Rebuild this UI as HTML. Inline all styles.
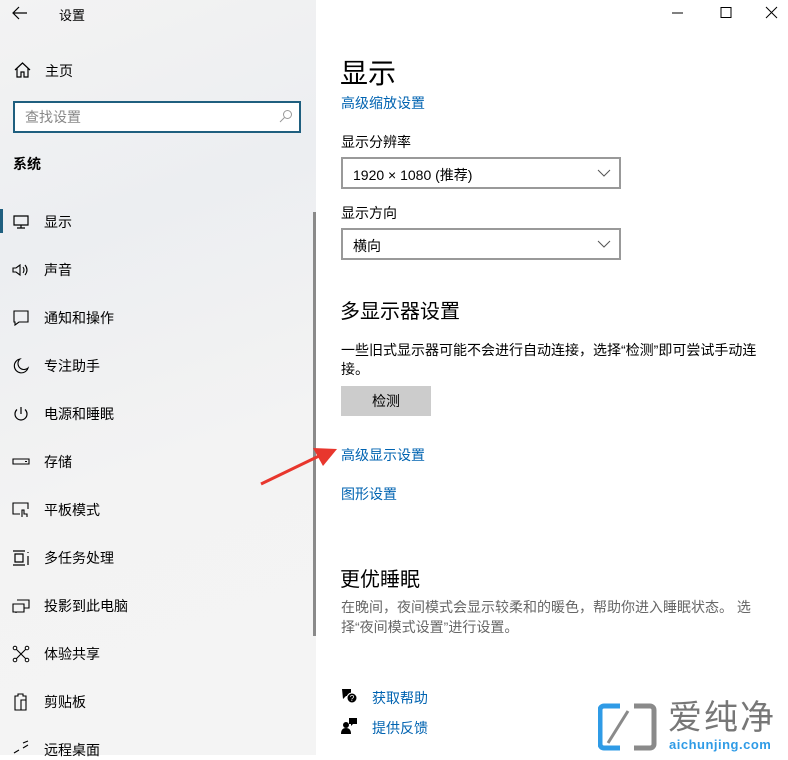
<!DOCTYPE html>
<html><head><meta charset="utf-8"><style>
*{margin:0;padding:0;box-sizing:border-box}
body{width:788px;height:755px;overflow:hidden;position:relative;font-family:"Liberation Sans","Noto Sans CJK SC",sans-serif;background:#fff;color:#000}
.side{position:absolute;left:0;top:0;width:316px;height:755px;background:linear-gradient(160deg,#f3f3f3 0%,#eceef1 30%,#f3f3f3 60%,#f4f4f4 100%)}
.abs{position:absolute}
.t{font-size:14px;white-space:nowrap}
.nav{position:absolute;left:44px;font-size:14px}
.ic{position:absolute;left:12px;width:18px;height:18px}
.link{color:#0063b1;font-size:14px;position:absolute;left:341px;white-space:nowrap}
.dd{position:absolute;left:341px;width:280px;height:32px;border:2px solid #999;background:#fff;font-size:14px;padding:6px 0 0 10px}
.dd svg{position:absolute;right:8px;top:10px}
</style></head><body>
<div class="side">
<svg class="abs" style="left:12px;top:6px" width="16" height="14" viewBox="0 0 16 14"><path d="M15 7H2M7 1L1 7l6 6" fill="none" stroke="#000" stroke-width="1.2"/></svg>
<div class="abs t" style="left:59px;top:5px;font-size:13px">设置</div>
<svg class="abs" style="left:14px;top:62px" width="17" height="16" viewBox="0 0 17 16"><path d="M1 8L8.5 1 16 8M3 6v9h4v-5h3v5h4V6" fill="none" stroke="#000" stroke-width="1.2"/></svg>
<div class="abs t" style="left:45px;top:61px">主页</div>
<div class="abs" style="left:13px;top:101px;width:288px;height:32px;border:2px solid #1f5f7f;background:#fff"></div>
<div class="abs t" style="left:25px;top:107px;color:#888">查找设置</div>
<svg class="abs" style="left:279px;top:109px" width="14" height="14" viewBox="0 0 14 14"><circle cx="8.5" cy="5.5" r="4" fill="none" stroke="#999"/><path d="M5.5 8.5L1 13" stroke="#999"/></svg>
<div class="abs t" style="left:13px;top:154px;font-weight:bold">系统</div>
<div class="abs" style="left:0;top:209px;width:3px;height:24px;background:#1f5f7f"></div>
<div class="abs" style="left:313px;top:212px;width:3px;height:424px;background:#8a8a8a"></div>

<svg class="ic" style="top:213px" viewBox="0 0 18 18"><path d="M2 3h14v9H2zM9 12v3M5 15h8" fill="none" stroke="#000" stroke-width="1.2"/></svg><div class="nav" style="top:212px">显示</div>
<svg class="ic" style="top:261px" viewBox="0 0 18 18"><path d="M1 7h3l4-3v10l-4-3H1zM11 6q2 3 0 6M13 4q4 5 0 10" fill="none" stroke="#000" stroke-width="1.1"/></svg><div class="nav" style="top:260px">声音</div>
<svg class="ic" style="top:309px" viewBox="0 0 18 18"><path d="M2 2h14v11H7l-4 3v-3H2z" fill="none" stroke="#000" stroke-width="1.1"/></svg><div class="nav" style="top:308px">通知和操作</div>
<svg class="ic" style="top:357px" viewBox="0 0 18 18"><path d="M8 2a7 7 0 1 0 8 9A6 6 0 0 1 8 2z" fill="none" stroke="#000" stroke-width="1.1"/></svg><div class="nav" style="top:356px">专注助手</div>
<svg class="ic" style="top:405px" viewBox="0 0 18 18"><path d="M9 2v7M5 4.5a6 6 0 1 0 8 0" fill="none" stroke="#000" stroke-width="1.2"/></svg><div class="nav" style="top:404px">电源和睡眠</div>
<svg class="ic" style="top:453px" viewBox="0 0 18 18"><path d="M1 6h16v5H1z" fill="none" stroke="#000" stroke-width="1.1"/><path d="M13 8.5h2" stroke="#000"/></svg><div class="nav" style="top:452px">存储</div>
<svg class="ic" style="top:501px" viewBox="0 0 18 18"><path d="M8 13H1V2h15v6M10 16v-7h2v4h3v3" fill="none" stroke="#000" stroke-width="1.1"/></svg><div class="nav" style="top:500px">平板模式</div>
<svg class="ic" style="top:549px" viewBox="0 0 18 18"><path d="M1 2h12M1 16h12M3 5h8v8H3zM16 3v1M16 7v9" fill="none" stroke="#000" stroke-width="1.2"/></svg><div class="nav" style="top:548px">多任务处理</div>
<svg class="ic" style="top:597px" viewBox="0 0 18 18"><path d="M5 3h12v8h-5M1 7h11v8H1zM4 15v1" fill="none" stroke="#000" stroke-width="1.1"/></svg><div class="nav" style="top:596px">投影到此电脑</div>
<svg class="ic" style="top:645px" viewBox="0 0 18 18"><path d="M4 4l10 10M14 4L4 14" stroke="#000" stroke-width="1.1"/><circle cx="3" cy="3" r="1.8" fill="#fff" stroke="#000"/><circle cx="15" cy="3" r="1.8" fill="#fff" stroke="#000"/><circle cx="3" cy="15" r="1.8" fill="#fff" stroke="#000"/><circle cx="15" cy="15" r="1.8" fill="#fff" stroke="#000"/></svg><div class="nav" style="top:644px">体验共享</div>
<svg class="ic" style="top:693px" viewBox="0 0 18 18"><path d="M3 3h3V1h5v2h3v14H3zM9 7h5v10H9z" fill="none" stroke="#000" stroke-width="1.1"/></svg><div class="nav" style="top:692px">剪贴板</div>
<svg class="ic" style="top:739px" viewBox="0 0 18 18"><path d="M2 14l5-3M11 4l5-2M16 6l-5 3" fill="none" stroke="#000" stroke-width="1.1"/></svg><div class="nav" style="top:740px">远程桌面</div>
</div>

<svg class="abs" style="left:672px;top:6px" width="110" height="14" viewBox="0 0 110 14"><path d="M0 7h11" stroke="#000"/><path d="M49 1.5h10v10h-10z" fill="none" stroke="#000"/><path d="M94 1l11 11M105 1L94 12" stroke="#000"/></svg>

<div class="abs" style="left:340px;top:52px;font-size:28px">显示</div>
<div class="link" style="top:93px">高级缩放设置</div>
<div class="abs t" style="left:341px;top:132px">显示分辨率</div>
<div class="dd" style="top:157px">1920 × 1080 (推荐)<svg width="14" height="8" viewBox="0 0 14 8"><path d="M1 1l6 6 6-6" fill="none" stroke="#555"/></svg></div>
<div class="abs t" style="left:341px;top:203px">显示方向</div>
<div class="dd" style="top:228px">横向<svg width="14" height="8" viewBox="0 0 14 8"><path d="M1 1l6 6 6-6" fill="none" stroke="#555"/></svg></div>
<div class="abs" style="left:340px;top:295px;font-size:20px">多显示器设置</div>
<div class="abs" style="left:341px;top:341px;font-size:14px;line-height:19px;width:420px">一些旧式显示器可能不会进行自动连接，选择“检测”即可尝试手动连接。</div>
<div class="abs t" style="left:341px;top:386px;width:90px;height:30px;background:#ccc;text-align:center;line-height:30px">检测</div>
<div class="link" style="top:445px">高级显示设置</div>
<div class="link" style="top:484px">图形设置</div>
<div class="abs" style="left:340px;top:563px;font-size:20px">更优睡眠</div>
<div class="abs" style="left:341px;top:597px;font-size:14px;line-height:20px;width:420px;color:#666">在晚间，夜间模式会显示较柔和的暖色，帮助你进入睡眠状态。 选择“夜间模式设置”进行设置。</div>
<svg class="abs" style="left:340px;top:687px" width="18" height="18" viewBox="0 0 18 18"><path d="M2 2h9v7H6l-3 3z" fill="#000"/><circle cx="12" cy="11" r="5" fill="#000" stroke="#fff"/><text x="12" y="14" font-size="8" fill="#fff" text-anchor="middle" font-family="Liberation Sans">?</text></svg>
<div class="link" style="left:372px;top:688px">获取帮助</div>
<svg class="abs" style="left:340px;top:717px" width="18" height="18" viewBox="0 0 18 18"><circle cx="6" cy="8" r="3" fill="#000"/><path d="M1 17q0-6 5-6t5 6z" fill="#000"/><path d="M9 1h8v6h-4l-2 2V7H9z" fill="#000"/></svg>
<div class="link" style="left:372px;top:718px">提供反馈</div>

<svg class="abs" style="left:255px;top:440px" width="90" height="50" viewBox="0 0 90 50"><path d="M6 44L64 16" stroke="#e8362d" stroke-width="3"/><path d="M82 9L58 8 68 26z" fill="#e8362d"/></svg>

<svg class="abs" style="left:598px;top:703px" width="60" height="48" viewBox="0 0 60 48"><path d="M22 3H6a4 4 0 0 0-4 4v34a4 4 0 0 0 4 4h16" fill="none" stroke="#2f9be6" stroke-width="5"/><path d="M36 3h16a4 4 0 0 1 4 4v34a4 4 0 0 1-4 4H36" fill="none" stroke="#8a8a8a" stroke-width="5"/><path d="M10 40L30 8" stroke="#8a8a8a" stroke-width="3"/></svg>
<div class="abs" style="left:668px;top:700px;font-size:34px;color:#777;letter-spacing:2px;line-height:36px">爱纯净</div>
<div class="abs" style="left:669px;top:737px;font-size:13px;color:#2f9be6;font-weight:bold;letter-spacing:0.5px">aichunjing.com</div>
</body></html>
